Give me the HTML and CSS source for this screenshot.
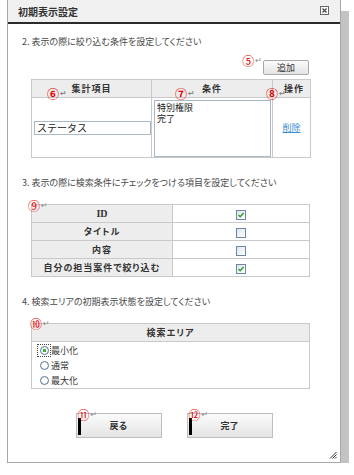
FILE: index.html
```html
<!DOCTYPE html>
<html lang="ja">
<head>
    <meta charset="UTF-8">
    <meta name="viewport" content="width=device-width, initial-scale=1.0">
    <title>初期表示設定</title>
    <link rel="stylesheet" href="styles.css">
</head>
<body>
    <div class="dialog">
        <div class="titlebar">
            <span class="title">初期表示設定</span>
            <svg class="close" width="9" height="9" viewBox="0 0 9 9">
                <rect x="0.5" y="0.5" width="8" height="8" fill="#fff" stroke="#666"/>
                <path d="M2.5 2.5 L6.5 6.5 M6.5 2.5 L2.5 6.5" stroke="#444" stroke-width="1.2"/>
            </svg>
        </div>

        <p class="step">2. 表示の際に絞り込む条件を設定してください</p>
        <div class="add-row">
            <span class="mark">⑤<i>↵</i></span>
            <button class="btn small">追加</button>
        </div>
        <table class="grid cond">
            <colgroup>
                <col class="c1"><col class="c2"><col class="c3">
            </colgroup>
            <tr class="head">
                <th><span class="mark m6">⑥<i>↵</i></span>集計項目</th>
                <th><span class="mark m7">⑦<i>↵</i></span>条件</th>
                <th class="op"><span class="mark m8">⑧<i>↵</i></span>操作</th>
            </tr>
            <tr class="body">
                <td><input class="field" type="text" value="ステータス"></td>
                <td><textarea class="area">特別権限
完了</textarea></td>
                <td class="center"><a class="link" href="#">削除</a></td>
            </tr>
        </table>

        <p class="step gap">3. 表示の際に検索条件にチェックをつける項目を設定してください</p>
        <div class="table-wrap">
            <span class="mark m9">⑨<i>↵</i></span>
            <table class="grid checks">
                <tr><th><span class="latin">ID</span></th><td><span class="box on"><svg width="8" height="8" viewBox="0 0 8 8"><path d="M1.5 4 L3.2 5.8 L6.6 2" fill="none" stroke="#2a9d2a" stroke-width="1.4"/></svg></span></td></tr>
                <tr><th>タイトル</th><td><span class="box"></span></td></tr>
                <tr><th>内容</th><td><span class="box"></span></td></tr>
                <tr><th>自分の担当案件で絞り込む</th><td><span class="box on"><svg width="8" height="8" viewBox="0 0 8 8"><path d="M1.5 4 L3.2 5.8 L6.6 2" fill="none" stroke="#2a9d2a" stroke-width="1.4"/></svg></span></td></tr>
            </table>
        </div>

        <p class="step gap">4. 検索エリアの初期表示状態を設定してください</p>
        <div class="table-wrap">
            <span class="mark m10">⑩<i>↵</i></span>
            <table class="grid area-table">
                <tr class="head"><th>検索エリア</th></tr>
                <tr>
                    <td class="radios">
                        <label class="choice"><span class="focus"><span class="radio on"></span></span>最小化</label>
                        <label class="choice"><span class="radio"></span>通常</label>
                        <label class="choice"><span class="radio"></span>最大化</label>
                    </td>
                </tr>
            </table>
        </div>

        <div class="actions">
            <div class="action">
                <span class="mark m11">⑪<i>↵</i></span>
                <button class="btn big"><span class="caret"></span>戻る</button>
            </div>
            <div class="action">
                <span class="mark m11">⑫<i>↵</i></span>
                <button class="btn big"><span class="caret"></span>完了</button>
            </div>
        </div>

        <svg class="grip" width="8" height="8" viewBox="0 0 8 8">
            <path d="M7.5 1 L1 7.5 M7.5 3.5 L3.5 7.5 M7.5 6 L6 7.5" stroke="#333" stroke-width="1"/>
        </svg>
    </div>
</body>
</html>
```

FILE: styles.css
```css
body {
    margin: 0;
    background-color: #fff;
    font-family: "Noto Sans CJK JP", "Noto Sans", sans-serif;
    font-size: 9px;
    color: #333;
    font-feature-settings: "palt";
}
.dialog {
    position: relative;
    margin-left: 7px;
    width: 332px;
    height: 462px;
    border: 1px solid #a8a8a8;
    border-top: 0;
    background-color: #fff;
    box-shadow: 8px 11px 0 #c3c3c3;
}
.titlebar {
    height: 22px;
    background-color: #f0f0f0;
    border-bottom: 2px solid #2a2a2a;
    display: flex;
    align-items: center;
    justify-content: space-between;
    padding: 0 11px 0 10px;
}
.title {
    font-size: 10px;
    font-weight: bold;
    color: #333;
}
.close {
    display: block;
    margin-top: -2px;
}
.step {
    margin: 12px 0 0 14px;
    line-height: 12px;
    color: #4a4a4a;
}
.step.gap {
    margin-top: 19px;
}
.add-row {
    display: flex;
    justify-content: flex-end;
    align-items: flex-start;
    margin: 12px 31px 4px 0;
    height: 15px;
}
.add-row .mark {
    margin: -5px 1px 0 0;
}
.mark {
    font-size: 12px;
    line-height: 12px;
    color: #e60000;
    white-space: nowrap;
}
.mark i {
    font-style: normal;
    font-family: "DejaVu Sans", sans-serif;
    font-size: 8px;
    color: #888;
    vertical-align: top;
    margin-left: 1px;
}
.btn {
    font-family: "Noto Sans CJK JP", sans-serif;
    font-size: 9px;
    color: #333;
    border: 1px solid #bdbdbd;
    background: linear-gradient(#fbfbfb, #e4e4e4);
    padding: 0;
    cursor: pointer;
}
.btn.small {
    width: 46px;
    height: 15px;
    border-color: #a9a9a9;
    border-radius: 2px;
    line-height: 13px;
}
.btn.big {
    position: relative;
    width: 86px;
    height: 25px;
    font-weight: bold;
}
.caret {
    position: absolute;
    left: 1px;
    top: 4px;
    width: 3px;
    height: 17px;
    background-color: #000;
}
.grid {
    margin-left: 23px;
    width: 279px;
    border-collapse: collapse;
    table-layout: fixed;
}
.grid th,
.grid td {
    border: 1px solid #c9c9c9;
    padding: 0;
}
.grid th {
    background-color: #ededed;
    font-weight: bold;
    letter-spacing: 1px;
    color: #333;
}
.cond .c1 { width: 120px; }
.cond .c2 { width: 121px; }
.cond .c3 { width: 38px; }
.cond .head th {
    position: relative;
    height: 17px;
}
.cond .head th.op {
    text-align: right;
    padding-right: 6px;
}
.cond .body td {
    height: 59px;
    background-color: #fff;
}
.cond .mark {
    position: absolute;
    top: 8px;
    letter-spacing: 0;
}
.m6 { left: 15px; }
.m7 { left: 23px; }
.m8 { left: -7px; }
.field {
    display: block;
    margin: 0 0 0 2px;
    width: 117px;
    height: 14px;
    box-sizing: border-box;
    border: 1px solid #a9b7c7;
    padding: 0 2px;
    font-family: "Noto Sans CJK JP", sans-serif;
    font-size: 10px;
    color: #222;
}
.area {
    display: block;
    margin: 1px 0 0 2px;
    width: 117px;
    height: 57px;
    box-sizing: border-box;
    border: 1px solid #a9b7c7;
    padding: 1px 2px;
    resize: none;
    font-family: "Noto Sans CJK JP", sans-serif;
    font-size: 9px;
    line-height: 11px;
    color: #222;
}
.center {
    text-align: center;
}
.link {
    color: #3a8fd0;
    text-decoration: underline;
}
.table-wrap {
    position: relative;
    margin-top: 15px;
}
.table-wrap .mark {
    position: absolute;
    z-index: 1;
}
.m9 { left: 20px; top: -4px; }
.m10 { left: 22px; top: -5px; }
.checks th {
    width: 140px;
    height: 17px;
    text-align: center;
}
.checks td {
    text-align: center;
    background-color: #fff;
}
.latin {
    font-family: "Liberation Serif", serif;
    font-size: 10px;
    letter-spacing: 0;
}
.box {
    display: inline-block;
    width: 10px;
    height: 10px;
    box-sizing: border-box;
    border: 1px solid #6d86a3;
    background: linear-gradient(135deg, #dfe4ea, #fff);
    vertical-align: middle;
}
.box svg {
    display: block;
}
.area-table .head th {
    height: 17px;
}
.radios {
    height: 46px;
    padding: 0 0 0 6px !important;
    vertical-align: top;
    background-color: #fff;
}
.choice {
    display: flex;
    align-items: center;
    height: 15px;
    gap: 1px;
}
.choice:first-child {
    margin-top: 1px;
}
.focus {
    display: inline-flex;
    align-items: center;
    justify-content: center;
    width: 12px;
    height: 11px;
    outline: 1px dotted #444;
}
.radio {
    display: inline-block;
    width: 9px;
    height: 9px;
    box-sizing: border-box;
    border: 1px solid #5f7896;
    border-radius: 50%;
    background: radial-gradient(circle, #fff 40%, #dfe4ea);
    margin: 0 1px 0 2px;
}
.focus .radio {
    margin: 0;
}
.radio.on {
    background: radial-gradient(circle, #36b536 0 1.6px, #fff 2px 40%, #dfe4ea);
}
.actions {
    display: flex;
    justify-content: center;
    gap: 25px;
    margin-top: 24px;
}
.action {
    position: relative;
}
.m11 {
    position: absolute;
    left: 2px;
    top: -4px;
    z-index: 1;
}
.grip {
    position: absolute;
    right: 3px;
    bottom: 3px;
}
```
